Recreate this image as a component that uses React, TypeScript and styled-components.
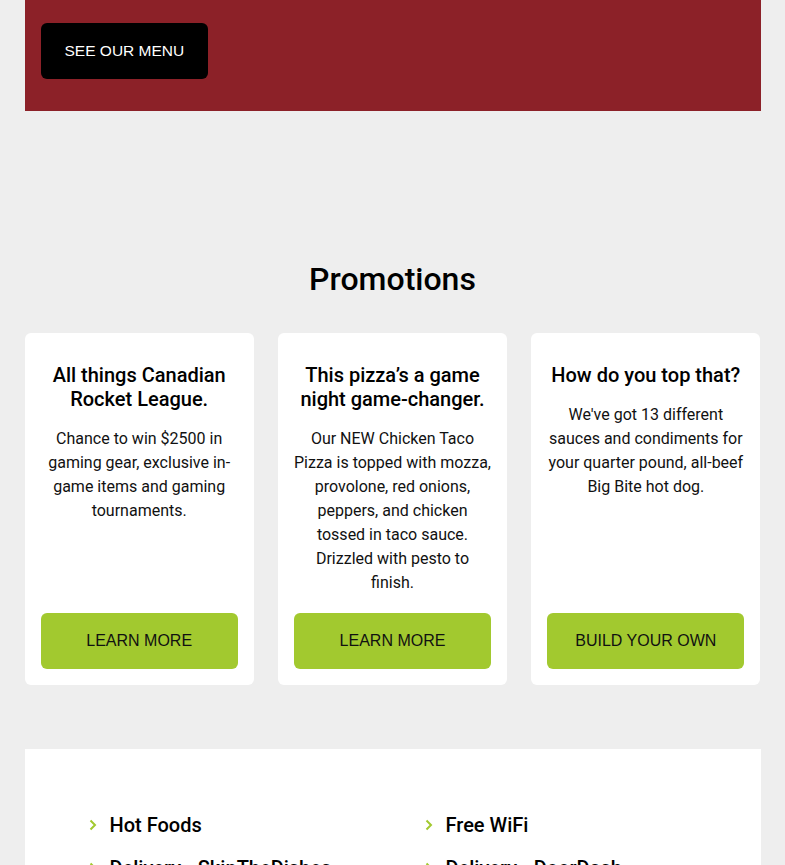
import * as React from 'react';
import styled, { createGlobalStyle } from 'styled-components';

const GlobalStyle = createGlobalStyle`
    * {
        box-sizing: border-box;
    }

    body {
        margin: 0;
        background: #eeeeee;
        font-family: Roboto, 'Noto Sans', sans-serif;
        color: #111111;
    }
`;

const promos = [
    {
        title: 'All things Canadian Rocket League.',
        text: 'Chance to win $2500 in gaming gear, exclusive in-game items and gaming tournaments.',
        cta: 'LEARN MORE'
    },
    {
        title: 'This pizza’s a game night game-changer.',
        text: 'Our NEW Chicken Taco Pizza is topped with mozza, provolone, red onions, peppers, and chicken tossed in taco sauce. Drizzled with pesto to finish.',
        cta: 'LEARN MORE'
    },
    {
        title: 'How do you top that?',
        text: "We've got 13 different sauces and condiments for your quarter pound, all-beef Big Bite hot dog.",
        cta: 'BUILD YOUR OWN'
    }
];

const amenities = ['Hot Foods', 'Free WiFi', 'Delivery - SkipTheDishes', 'Delivery - DoorDash'];

const Page = styled.main`
    width: 736px;
    margin: 0 auto;
`;

const Banner = styled.section`
    background: #8c2128;
    padding: 23px 16px 32px;
`;

const DarkButton = styled.a`
    display: inline-flex;
    align-items: center;
    height: 56px;
    padding: 0 24px;
    border-radius: 6px;
    background: #000;
    color: #fff;
    font-family: 'Liberation Sans', Arial, sans-serif;
    font-size: 15.5px;
    text-decoration: none;
`;

const Promotions = styled.section`
    padding-top: 148px;
`;

const Heading = styled.h2`
    margin: 0 0 34px;
    text-align: center;
    font-size: 32px;
    line-height: 40px;
    font-weight: 500;
    color: #000;
`;

const CardGrid = styled.div`
    display: grid;
    grid-template-columns: repeat(3, 1fr);
    gap: 24px;
`;

const Card = styled.article`
    display: flex;
    flex-direction: column;
    background: #fff;
    border-radius: 6px;
    padding: 30px 16px 16px;
    text-align: center;
`;

const CardTitle = styled.h3`
    margin: 0 0 16px;
    font-size: 20px;
    line-height: 24px;
    font-weight: 500;
    color: #000;
`;

const CardText = styled.p`
    margin: 0 0 18px;
    font-size: 16px;
    line-height: 24px;
`;

const GreenButton = styled.a`
    display: flex;
    align-items: center;
    justify-content: center;
    height: 56px;
    margin-top: auto;
    border-radius: 6px;
    background: #a2c92f;
    color: #111;
    font-family: 'Liberation Sans', Arial, sans-serif;
    font-size: 16px;
    text-decoration: none;
`;

const Amenities = styled.section`
    margin-top: 64px;
    background: #fff;
    padding: 64px 0 40px 63px;
`;

const AmenityList = styled.ul`
    display: grid;
    grid-template-columns: 336px 1fr;
    row-gap: 19px;
    margin: 0;
    padding: 0;
    list-style: none;
`;

const Amenity = styled.li`
    display: flex;
    align-items: center;
    gap: 12px;
    font-size: 20px;
    line-height: 24px;
    font-weight: 500;
    color: #000;
`;

const Chevron = () => (
    <svg width="10" height="12" viewBox="0 0 10 12" fill="none">
        <polyline points="2.5,1.5 7,6 2.5,10.5" stroke="#a2c92f" strokeWidth="2" />
    </svg>
);

const App = () => (
    <>
        <GlobalStyle />
        <Page>
            <Banner>
                <DarkButton href="#">SEE OUR MENU</DarkButton>
            </Banner>

            <Promotions>
                <Heading>Promotions</Heading>
                <CardGrid>
                    {promos.map(p => (
                        <Card key={p.title}>
                            <CardTitle>{p.title}</CardTitle>
                            <CardText>{p.text}</CardText>
                            <GreenButton href="#">{p.cta}</GreenButton>
                        </Card>
                    ))}
                </CardGrid>
            </Promotions>

            <Amenities>
                <AmenityList>
                    {amenities.map(a => (
                        <Amenity key={a}>
                            <Chevron />
                            {a}
                        </Amenity>
                    ))}
                </AmenityList>
            </Amenities>
        </Page>
    </>
);

export default App;
